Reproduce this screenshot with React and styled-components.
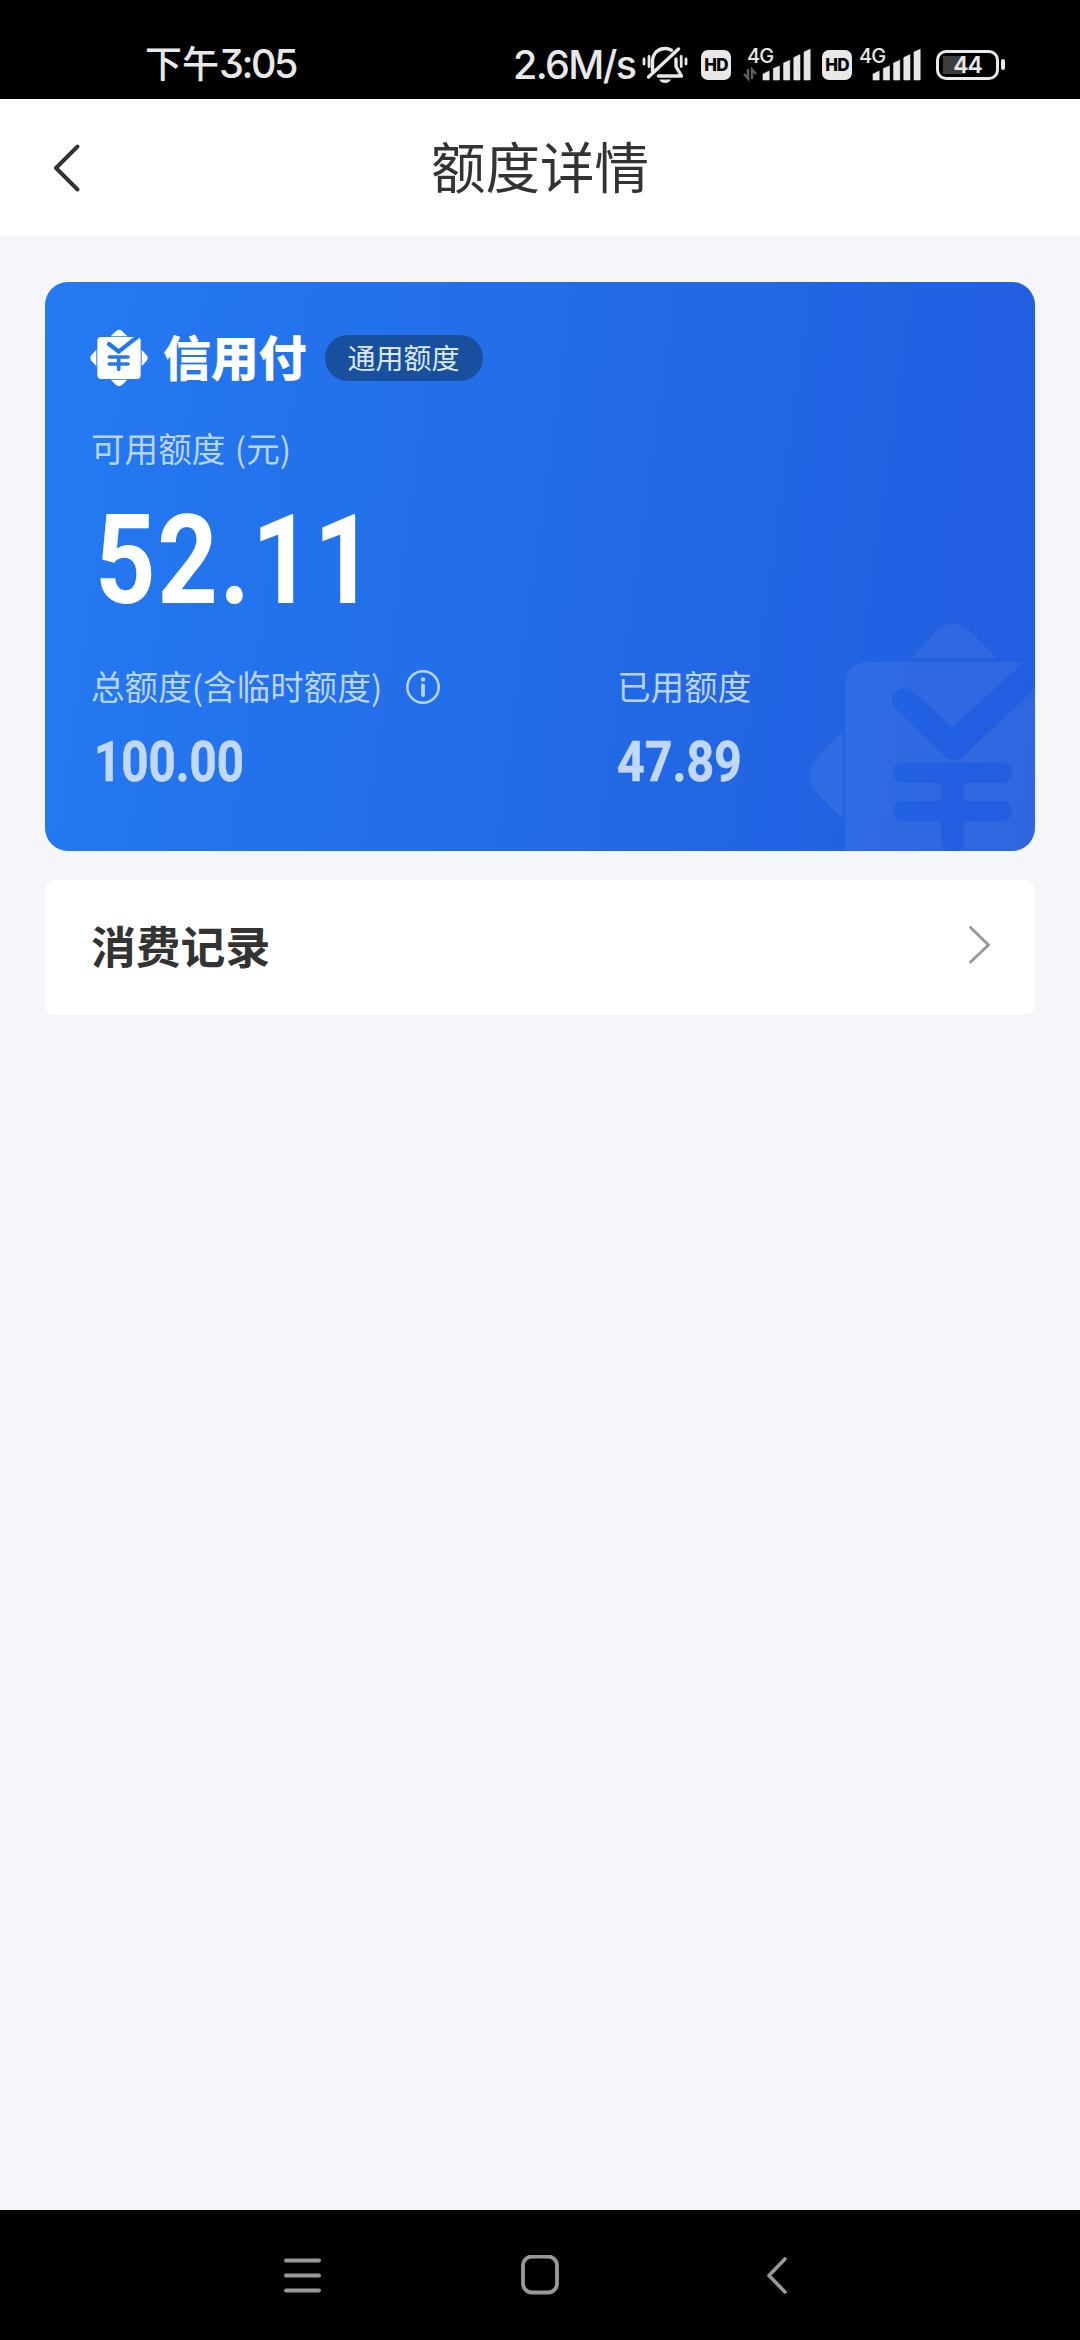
import React from "react";
import styled, { createGlobalStyle } from "styled-components";

const cjk = '"Noto Sans CJK SC", sans-serif';

const GlobalStyle = createGlobalStyle`
  * { box-sizing: border-box; }
  html, body { margin: 0; padding: 0; background: #f4f6fb; }
  body { font-family: ${cjk}; color: #333; }
  svg { display: block; flex: none; }
`;

const Screen = styled.div`
  width: 1080px;
  height: 2340px;
  display: flex;
  flex-direction: column;
  overflow: hidden;
`;

/* ---------- status bar ---------- */

const StatusBar = styled.div`
  height: 99px;
  flex: none;
  background: #000;
  color: #e8e8e8;
  display: flex;
  align-items: center;
  padding: 30px 75px 0 145px;
`;

const Clock = styled.div`
  display: flex;
  align-items: baseline;
  font-weight: 500;
  font-size: 37px;
  line-height: 50px;
  padding-bottom: 3px;
  white-space: nowrap;
`;

const Digits = styled.span`
  font-family: Inter, sans-serif;
  font-size: 39.5px;
  font-weight: 500;
  letter-spacing: ${(p) => p.$spacing || "0"};
  font-feature-settings: "cv09";
  white-space: nowrap;
`;

const StatusIcons = styled.div`
  margin-left: auto;
  display: flex;
  align-items: center;
`;

const SpeedText = styled(Digits)`
  width: 129px;
  line-height: 40px;
`;

const HdBadge = styled.div`
  width: 30px;
  height: 30px;
  border-radius: 7px;
  background: #e8e8e8;
  color: #000;
  font: 800 17px/30px Inter, sans-serif;
  letter-spacing: -0.8px;
  text-align: center;
  margin-left: ${(p) => p.$gap}px;
`;

const SignalBox = styled.div`
  position: relative;
  width: ${(p) => p.$width}px;
  height: 36px;
  margin-left: ${(p) => p.$gap}px;
`;

const NetLabel = styled.span`
  position: absolute;
  left: ${(p) => p.$left}px;
  top: -1px;
  font: 500 20px/20px Inter, sans-serif;
  letter-spacing: -0.8px;
`;

const BatteryBody = styled.div`
  width: 63px;
  height: 30px;
  border: 3px solid #e8e8e8;
  border-radius: 10px;
  margin-left: 14px;
  padding: 3px 4px;
  font: 600 23px/18px Inter, sans-serif;
  letter-spacing: -1px;
  text-align: center;
  background: linear-gradient(#3c3c3c, #3c3c3c) 4px 3px / 22px 18px no-repeat;
`;

const BatteryNub = styled.div`
  width: 4px;
  height: 11px;
  border-radius: 2px;
  background: #e8e8e8;
  margin-left: 2px;
`;

/* ---------- page header ---------- */

const Header = styled.header`
  height: 138px;
  flex: none;
  background: #fff;
  border-bottom: 1px solid #f2f2f2;
  display: grid;
  grid-template-columns: 120px 1fr 120px;
  align-items: center;
`;

const BackButton = styled.div`
  padding-left: 50px;
`;

const Title = styled.h1`
  margin: 0;
  padding-bottom: 5px;
  font-size: 54.5px;
  font-weight: 400;
  line-height: 80px;
  text-align: center;
`;

/* ---------- content ---------- */

const Content = styled.main`
  flex: 1;
  padding: 45px 45px 0;
  display: flex;
  flex-direction: column;
  gap: 29px;
`;

const QuotaCard = styled.section`
  position: relative;
  height: 569px;
  border-radius: 23px;
  overflow: hidden;
  padding: 47px 45px 0;
  background: linear-gradient(98deg, #247af1 0%, #226ae6 55%, #225ddf 100%);
`;

const Watermark = styled.svg`
  position: absolute;
  right: 0;
  bottom: 0;
`;

const BrandRow = styled.div`
  display: flex;
  align-items: center;
  height: 58px;
`;

const BrandName = styled.div`
  margin-left: 15px;
  padding-bottom: 7px;
  width: 162px;
  font-size: 48px;
  font-weight: 900;
  line-height: 58px;
  letter-spacing: -0.2px;
  color: #fff;
  white-space: nowrap;
`;

const Tag = styled.div`
  width: 158px;
  height: 46px;
  border-radius: 23px;
  background: #184f9f;
  color: #dbe8fa;
  font-size: 28px;
  line-height: 44px;
  text-align: center;
  padding-right: 1px;
`;

const Label = styled.div`
  display: flex;
  align-items: center;
  height: 48px;
  margin-top: ${(p) => p.$top || 0}px;
  padding-left: ${(p) => p.$indent || 0}px;
  font-size: 33.6px;
  line-height: 48px;
  word-spacing: 2px;
  color: #b9d4fb;
  white-space: nowrap;
`;

const Amount = styled.div`
  font-family: Roboto, sans-serif;
  font-weight: 700;
  white-space: nowrap;
  transform-origin: 0 50%;
  transform: scaleX(${(p) => p.$squeeze});
`;

const MainAmount = styled(Amount)`
  margin: 29px 0 0 5px;
  height: 122px;
  font-size: 123.5px;
  line-height: 120px;
  letter-spacing: 1.9px;
  color: #fff;
`;

const SubAmount = styled(Amount)`
  height: 60px;
  margin: 23px 0 0 ${(p) => p.$indent}px;
  font-size: 55.5px;
  line-height: 60px;
  color: #c2d8fb;
  -webkit-text-stroke: 0.6px #c2d8fb;
`;

const Columns = styled.div`
  display: grid;
  grid-template-columns: 527px 1fr;
  margin-top: 39px;
`;

const InfoIcon = styled.svg`
  margin: 2px 0 0 23px;
`;

const LinkRow = styled.section`
  height: 135px;
  border-radius: 10px;
  background: #fff;
  display: flex;
  align-items: center;
  justify-content: space-between;
  padding: 0 43px 6px 46px;
  font-size: 44.8px;
  font-weight: 700;
  line-height: 60px;
`;

/* ---------- system navigation ---------- */

const NavBar = styled.nav`
  height: 130px;
  flex: none;
  background: #000;
  display: flex;
  justify-content: space-between;
  align-items: center;
  padding: 0 284px 0 283px;
`;

const MutedBell = () => (
  <svg width="46" height="38" viewBox="0 0 46 38" fill="none" stroke="#e8e8e8" strokeWidth="3.4" strokeLinecap="round" strokeLinejoin="round">
    <path d="M10.5 25V15C11 6.500 17 2.500 23 2.500C25.500 2.500 27.500 3 29.500 4.200" />
    <path d="M34 13V20.500L39.500 30H16.500" />
    <path d="M6.500 31L36.500 3" />
    <path d="M2 13V18M7 10.500V20.500M39.200 10.500V20.500M44 13V18" strokeWidth="2.800" />
    <path d="M17 33.500H29C27.500 36 25.500 37 23 37C20.500 37 18.500 36 17 33.500Z" fill="#e8e8e8" stroke="none" />
  </svg>
);

const BARS = [
  [0, 24, 28],
  [10.3, 19, 22.5],
  [20.6, 13.2, 17],
  [30.8, 7.6, 11.5],
  [41, 2.2, 6],
];

const SignalBars = ({ left, data }) => (
  <svg width={left + 48} height="36" viewBox={`0 0 ${left + 48} 36`}>
    {BARS.map(([x, top, side]) => (
      <path
        key={x}
        d={`M${left + x} ${side - 1}L${left + x + 6.2} ${top}V33H${left + x}Z`}
        fill="#e8e8e8"
        stroke="#e8e8e8"
        strokeWidth="0.6"
        strokeLinejoin="round"
      />
    ))}
    {data && (
      <path d="M1 27L5 31.500V22M9 32V22.500L13 27" stroke="#606060" strokeWidth="2.400" fill="none" />
    )}
  </svg>
);

const BrandLogo = () => (
  <svg width="58" height="58" viewBox="0 0 174 174">
    <path d="M62 22L78 6Q87 -1 96 6L112 22ZM62 152L78 168Q87 175 96 168L112 152ZM19 62L4 79Q-2 87 4 95L19 112ZM155 62L170 79Q176 87 170 95L155 112Z" fill="#fff" />
    <rect x="22" y="24" width="130" height="126" rx="12" fill="#fff" />
    <path d="M57 45L86 68L144 22" stroke="#2478ee" strokeWidth="13" strokeLinecap="round" strokeLinejoin="round" fill="none" />
    <path d="M58 84H114M58 105H114M86 84V121" stroke="#2478ee" strokeWidth="11" strokeLinecap="round" fill="none" />
  </svg>
);

const CardWatermark = () => (
  <Watermark width="255" height="261" viewBox="0 0 765 783">
    <g fill="#fff" fillOpacity="0.06">
      <path d="M395 204L475 120Q521 82 567 120L650 204Z" />
      <path d="M187 424L112 503Q70 552 104 603L187 688Z" />
      <path
        fillRule="evenodd"
        d="M270 215H733L518 412L401 305C365 275 315 315 345 355L490 494C510 515 535 515 555 495L765 294V783H553V692H667C707 692 707 633 667 633H553V578H667C707 578 707 519 667 519H369C329 519 329 578 369 578H483V633H369C329 633 329 692 369 692H483V750Q484 774 500 783H195V290Q195 215 270 215ZM553 750Q552 774 536 783H553Z"
      />
    </g>
  </Watermark>
);

export default function App() {
  return (
    <>
      <GlobalStyle />
      <Screen>
        <StatusBar>
          <Clock>
            下午<Digits $spacing="-2.4px">3:05</Digits>
          </Clock>
          <StatusIcons>
            <SpeedText $spacing="-1.6px">2.6M/s</SpeedText>
            <MutedBell />
            <HdBadge $gap={13}>HD</HdBadge>
            <SignalBox $width={67} $gap={12}>
              <NetLabel $left={4}>4G</NetLabel>
              <SignalBars left={20} data />
            </SignalBox>
            <HdBadge $gap={12}>HD</HdBadge>
            <SignalBox $width={64} $gap={6}>
              <NetLabel $left={1}>4G</NetLabel>
              <SignalBars left={15} />
            </SignalBox>
            <BatteryBody>44</BatteryBody>
            <BatteryNub />
          </StatusIcons>
        </StatusBar>

        <Header>
          <BackButton>
            <svg width="34" height="52" viewBox="0 0 34 52" fill="none" stroke="#333" strokeWidth="4" strokeLinecap="round" strokeLinejoin="round">
              <path d="M27.500 4.500L6 26L27.500 47.500" />
            </svg>
          </BackButton>
          <Title>额度详情</Title>
        </Header>

        <Content>
          <QuotaCard>
            <CardWatermark />
            <BrandRow>
              <BrandLogo />
              <BrandName>信用付</BrandName>
              <Tag>通用额度</Tag>
            </BrandRow>
            <Label $top={37} $indent={1}>可用额度 (元)</Label>
            <MainAmount $squeeze={0.855}>52.11</MainAmount>
            <Columns>
              <div>
                <Label $indent={1}>
                  总额度(含临时额度)
                  <InfoIcon width="36" height="36" viewBox="0 0 36 36" fill="none" stroke="#b9d4fb">
                    <circle cx="18" cy="18" r="15.700" strokeWidth="2.600" />
                    <path d="M18 16.500V26" strokeWidth="3.800" strokeLinecap="round" />
                    <circle cx="18" cy="10.500" r="2.200" fill="#b9d4fb" stroke="none" />
                  </InfoIcon>
                </Label>
                <SubAmount $indent={4} $squeeze={0.855}>100.00</SubAmount>
              </div>
              <div>
                <Label>已用额度</Label>
                <SubAmount $indent={0} $squeeze={0.87}>47.89</SubAmount>
              </div>
            </Columns>
          </QuotaCard>

          <LinkRow>
            消费记录
            <svg width="24" height="40" viewBox="0 0 24 40" fill="none" stroke="#999" strokeWidth="3" strokeLinecap="round" strokeLinejoin="round">
              <path d="M2.500 2.500L20.500 20L2.500 37" />
            </svg>
          </LinkRow>
        </Content>

        <NavBar>
          <svg width="39" height="40" viewBox="0 0 39 40" stroke="#999" strokeWidth="4" strokeLinecap="round">
            <path d="M3 5.500H36M3 20.500H36M3 35.500H36" />
          </svg>
          <svg width="40" height="40" viewBox="0 0 40 40" fill="none" stroke="#999" strokeWidth="3.800">
            <rect x="3" y="1.500" width="34" height="36" rx="9" />
          </svg>
          <svg width="38" height="40" viewBox="-8 0 38 40" fill="none" stroke="#999" strokeWidth="3.600" strokeLinecap="round" strokeLinejoin="round">
            <path d="M19 4L3 20.500L19 37" />
          </svg>
        </NavBar>
      </Screen>
    </>
  );
}
